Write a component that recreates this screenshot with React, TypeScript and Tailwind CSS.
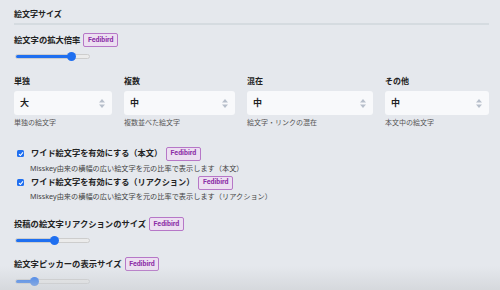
import React from "react";

const FONT = { fontFamily: "'Noto Sans', 'Noto Sans CJK JP', sans-serif" };

const columns = [
  { label: "単独", value: "大", hint: "単独の絵文字", width: "w-[98px]" },
  { label: "複数", value: "中", hint: "複数並べた絵文字", width: "w-[111px]" },
  { label: "混在", value: "中", hint: "絵文字・リンクの混在", width: "w-[126px]" },
  { label: "その他", value: "中", hint: "本文中の絵文字", width: "w-[104px]" },
];

function Badge() {
  return (
    <span
      className="inline-flex items-center shrink-0 h-[14px] px-[3.5px] rounded-[2px] border border-[#b677c7] bg-[#ecdff1] text-[#8b2ca6] text-[7px] font-bold leading-none"
      style={{ fontFamily: "Roboto, 'Noto Sans', sans-serif" }}
    >
      Fedibird
    </span>
  );
}

function Slider({ value }: { value: number }) {
  return (
    <div className="relative w-[75px] h-[9px] ml-[1px] flex items-center">
      <div className="w-full h-[5px] rounded-full bg-[#ebebeb] border border-[#cdcdcd] overflow-hidden">
        <div className="h-full bg-[#1f6ff0]" style={{ width: `${value}%` }} />
      </div>
      <div
        className="absolute top-0 w-[9px] h-[9px] rounded-full bg-[#1f6ff0]"
        style={{ left: `calc(${value}% - 4.5px)` }}
      />
    </div>
  );
}

function Arrows() {
  return (
    <svg width="6" height="9" viewBox="0 0 6 9" className="mr-[7px]">
      <path d="M3 0 L6 3.6 L0 3.6 Z" fill="#b7bfcb" />
      <path d="M3 9 L6 5.4 L0 5.4 Z" fill="#b7bfcb" />
    </svg>
  );
}

function Check() {
  return (
    <span className="w-[7px] h-[7px] rounded-[1.5px] bg-[#1f6ff0] flex items-center justify-center">
      <svg width="6" height="6" viewBox="0 0 6 6">
        <path d="M1 3.1 L2.4 4.5 L5 1.4" stroke="#fff" strokeWidth="1.1" fill="none" />
      </svg>
    </span>
  );
}

function LabelRow({ text, className = "" }: { text: string; className?: string }) {
  return (
    <div className={`flex items-center gap-[3px] h-[14px] ${className}`}>
      <span className="text-[8.3px] font-bold text-[#222] leading-none">{text}</span>
      <Badge />
    </div>
  );
}

function CheckRow({ text, className = "" }: { text: string; className?: string }) {
  return (
    <div className={`ml-[3px] flex items-center h-[13px] ${className}`}>
      <Check />
      <span className="ml-[7px] mr-[4px] text-[8.2px] font-bold text-[#222] leading-none">{text}</span>
      <Badge />
    </div>
  );
}

export default function App() {
  return (
    <div className="relative w-[500px] h-[290px] overflow-hidden bg-[#e5e8ed] pl-[14px] pr-[11px]" style={FONT}>
      <div className="mt-[8px] h-[11px] text-[8px] font-bold text-[#222] leading-[11px]">絵文字サイズ</div>
      <div className="mt-[4px] h-[2px] bg-[#d5dbe0]" />

      <LabelRow text="絵文字の拡大倍率" className="mt-[8px]" />
      <div className="mt-[5px]">
        <Slider value={75} />
      </div>

      <div className="mt-[14px] flex gap-[12px]">
        {columns.map((c) => (
          <div key={c.label} className={c.width}>
            <div className="h-[12px] text-[8px] font-bold text-[#222] leading-[12px]">{c.label}</div>
            <div className="mt-[4px] h-[24px] rounded-[3px] bg-[#f8f9fb] flex items-center justify-between pl-[6px]">
              <span className="text-[9px] font-semibold text-[#222]">{c.value}</span>
              <Arrows />
            </div>
            <div className="mt-[3px] h-[10px] text-[7px] text-[#555] leading-[10px]">{c.hint}</div>
          </div>
        ))}
      </div>

      <CheckRow text="ワイド絵文字を有効にする（本文）" className="mt-[19px]" />
      <div className="mt-[3px] ml-[16px] h-[10px] text-[7.2px] text-[#444] leading-[10px]">
        Misskey由来の横幅の広い絵文字を元の比率で表示します（本文）
      </div>
      <CheckRow text="ワイド絵文字を有効にする（リアクション）" className="mt-[3px]" />
      <div className="mt-[2px] ml-[16px] h-[10px] text-[7.2px] text-[#444] leading-[10px]">
        Misskey由来の横幅の広い絵文字を元の比率で表示します（リアクション）
      </div>

      <LabelRow text="投稿の絵文字リアクションのサイズ" className="mt-[16px]" />
      <div className="mt-[5px]">
        <Slider value={53} />
      </div>

      <LabelRow text="絵文字ピッカーの表示サイズ" className="mt-[12px]" />
      <div className="mt-[6px]">
        <Slider value={26} />
      </div>

      <div className="pointer-events-none absolute left-0 right-0 bottom-0 h-[24px] bg-gradient-to-b from-transparent to-[#cfd2d6]/70" />
    </div>
  );
}
